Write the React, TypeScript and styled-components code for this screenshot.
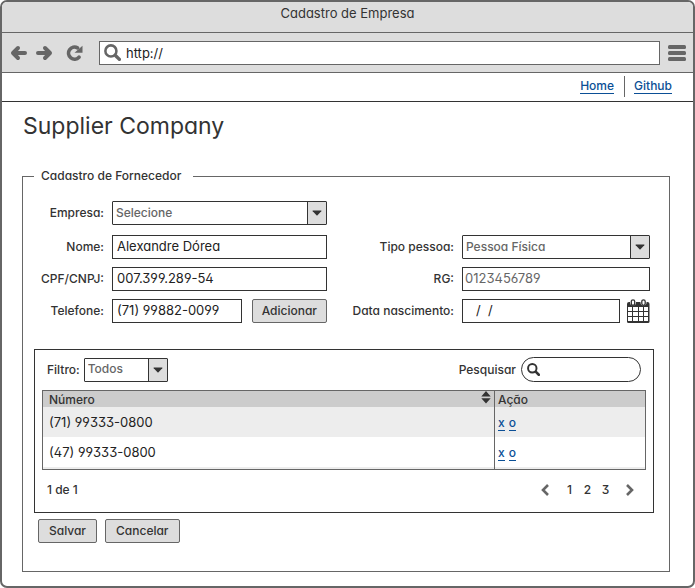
import React from 'react';
import styled, { createGlobalStyle } from 'styled-components';

const ink = '#333';
const steel = '#666';
const panel = '#ddd';

const GlobalStyle = createGlobalStyle`
  *, *::before, *::after { box-sizing: border-box; }
  body { margin: 0; background: #fff; }
  body, input, select, button {
    font-family: Inter, 'Liberation Sans', sans-serif;
    font-size: 12px;
    font-weight: 500;
    line-height: 18px;
    font-feature-settings: 'cv11' 1, 'ss01' 1;
    color: ${ink};
  }
`;

const Frame = styled.div`
  min-height: 100vh;
  border: 2px solid ${steel};
  border-radius: 7px;
  background: #fff;
  overflow: hidden;
`;

const TitleBar = styled.div`
  height: 31px;
  padding-top: 2px;
  font-size: 13px;
  font-weight: 400;
  text-align: center;
  background: ${panel};
  border-bottom: 1px solid ${steel};
`;

const Toolbar = styled.div`
  display: flex;
  align-items: center;
  height: 40px;
  padding: 0 7px 0 8px;
  background: ${panel};
  border-bottom: 1px solid ${steel};
`;

const IconButton = styled.button<{ $gap: number }>`
  display: flex;
  flex: none;
  padding: 0;
  margin-right: ${(p) => p.$gap}px;
  border: 0;
  background: none;
  color: ${steel};
`;

const AddressBar = styled.label`
  display: flex;
  flex: 1;
  align-items: center;
  gap: 5px;
  height: 24px;
  padding-left: 4px;
  margin-right: 8px;
  border: 1px solid ${steel};
  background: #fff;
  color: ${steel};
`;

const BareInput = styled.input`
  flex: 1;
  min-width: 0;
  padding: 0;
  border: 0;
  outline: 0;
  font-size: 13px;
  font-weight: 400;
  color: #222;
  background: none;
`;

const Nav = styled.nav`
  display: flex;
  justify-content: flex-end;
  height: 29px;
  padding: 3px 11px 4px;
  border-bottom: 1px solid ${ink};
`;

const NavItem = styled.div`
  padding: 1px 10px 0 9px;
  & + & { border-left: 1px solid ${steel}; }
`;

const Link = styled.a`
  display: inline-block;
  line-height: 15px;
  color: #0b4f96;
  text-decoration: none;
  border-bottom: 1px solid #0b4f96;
`;

const Main = styled.main`
  padding: 9px 23px 14px 21px;
`;

const Heading = styled.h1`
  margin: 0 0 25px;
  font-size: 23px;
  line-height: 30px;
  font-weight: 400;
`;

const Group = styled.fieldset`
  min-width: 0;
  margin: 0 0 0 -1px;
  padding: 15px 15px 28px 11px;
  border: 1px solid ${steel};
`;

const Legend = styled.legend`
  padding: 1px 12px 1px 7px;
`;

const FormGrid = styled.div`
  display: grid;
  grid-template-columns: 70px minmax(0, 215fr) 119px minmax(0, 188fr);
  grid-template-rows: 26px repeat(3, 24px);
  column-gap: 8px;
  row-gap: 8px;
  padding-right: 4px;
  margin-bottom: 26px;
`;

const Label = styled.label<{ $start?: boolean }>`
  height: 24px;
  line-height: 23px;
  text-align: right;
  white-space: nowrap;
  justify-self: end;
  ${(p) => p.$start && 'grid-column: 1;'}
`;

const TextInput = styled.input`
  flex: 1;
  width: 100%;
  min-width: 0;
  height: 24px;
  padding: 0 4px 2px;
  border: 1px solid ${ink};
  border-radius: 0;
  font-size: 13px;
  font-weight: 400;
  color: #222;
  background: #fff;
  &::placeholder { color: ${steel}; opacity: 1; }
`;

const MutedInput = styled(TextInput)`
  padding-left: 2px;
`;

const DateInput = styled(TextInput)`
  padding-left: 13px;
  white-space: pre;
`;

const FieldRow = styled.div<{ $gap: number }>`
  display: flex;
  align-items: center;
  gap: ${(p) => p.$gap}px;
`;

const SelectShell = styled.div<{ $width?: number }>`
  position: relative;
  height: 24px;
  width: ${(p) => (p.$width ? `${p.$width}px` : '100%')};
`;

const NativeSelect = styled.select`
  appearance: none;
  width: 100%;
  height: 24px;
  padding: 0 22px 1px 3px;
  border: 1px solid ${ink};
  border-radius: 1px;
  background: #fff;
  color: ${steel};
`;

const SelectArrow = styled.span`
  position: absolute;
  top: 1px;
  right: 1px;
  bottom: 1px;
  display: flex;
  align-items: center;
  justify-content: center;
  width: 19px;
  background: ${panel};
  border-left: 1px solid ${ink};
  pointer-events: none;
`;

const Button = styled.button`
  height: 24px;
  padding: 0 9px;
  border: 1px solid ${steel};
  border-radius: 2px;
  background: ${panel};
  white-space: nowrap;
`;

const CalendarButton = styled(IconButton)`
  color: ${ink};
`;

const ListPanel = styled.section`
  padding: 7px;
  border: 1px solid ${ink};
`;

const PanelHead = styled.div`
  display: flex;
  align-items: center;
  justify-content: space-between;
  padding: 0 5px;
  margin-bottom: 8px;
`;

const SearchBox = styled.span`
  display: flex;
  align-items: center;
  width: 120px;
  height: 25px;
  padding: 0 10px 0 5px;
  border: 1px solid ${ink};
  border-radius: 13px;
`;

const TableFrame = styled.div`
  border: 1px solid ${steel};
`;

const Table = styled.table`
  width: 100%;
  table-layout: fixed;
  border-collapse: collapse;
`;

const HeadCell = styled.th<{ $share?: string }>`
  width: ${(p) => p.$share ?? 'auto'};
  height: 16px;
  padding: 0 3px 0 6px;
  line-height: 16px;
  font-weight: 500;
  text-align: left;
  background: #ccc;
  & + & { border-left: 1px solid ${steel}; padding-left: 3px; }
`;

const HeadContent = styled.span`
  display: flex;
  justify-content: space-between;
  height: 16px;
  line-height: 17px;
`;

const Row = styled.tr`
  background: #fff;
  &:nth-child(odd) { background: #ededed; }
`;

const Cell = styled.td<{ $height?: number }>`
  height: ${(p) => p.$height ?? 30}px;
  padding: 0 6px;
  font-size: 13px;
  font-weight: 400;
  color: #222;
  & + & { border-left: 1px solid ${steel}; padding-left: 3px; }
`;

const ActionLinks = styled.span`
  display: flex;
  gap: 4px;
  font-size: 12px;
  font-weight: 500;
  padding-top: 1px;
`;

const PanelFoot = styled.div`
  display: flex;
  align-items: center;
  justify-content: space-between;
  height: 24px;
  padding: 0 12px 0 5px;
  margin: 8px 0 3px;
`;

const Pager = styled.div`
  display: flex;
  align-items: center;
  gap: 12px;
`;

const Pages = styled.span`
  display: flex;
  gap: 1px;
`;

const PageButton = styled.button`
  width: 17px;
  padding: 0;
  border: 0;
  background: none;
`;

const Actions = styled.div`
  display: flex;
  gap: 8px;
  padding: 6px 4px 0;
`;

const ActionButton = styled(Button)`
  padding: 0 10px;
`;

const Arrow = ({ back }: { back?: boolean }) => (
  <svg width="17" height="16" viewBox="0 0 17 16" fill="none" stroke="currentColor" strokeWidth="4" strokeLinecap="round" strokeLinejoin="round">
    <path d={back ? 'M15 8H4M8 3L3 8l5 5' : 'M2 8h11M9 3l5 5-5 5'} />
  </svg>
);

const Reload = () => (
  <svg width="17" height="16" viewBox="0 0 17 16">
    <path d="M13 12.200A6 6 0 1 1 11.500 2.900" fill="none" stroke="currentColor" strokeWidth="3.600" strokeLinecap="round" />
    <path d="M16.500.8v7H8.500z" fill="currentColor" />
  </svg>
);

const Magnifier = ({ size, weight }: { size: number; weight: number }) => (
  <svg width={size} height={size} viewBox="0 0 16 16" fill="none" stroke="currentColor" strokeLinecap="round">
    <circle cx="6.500" cy="6.500" r="5.200" strokeWidth={weight} />
    <path d="M11 11l3.500 3.500" strokeWidth={weight + 0.8} />
  </svg>
);

const Menu = () => (
  <svg width="18" height="16" viewBox="0 0 18 16" fill="currentColor">
    <rect width="18" height="4" rx="1.500" />
    <rect y="6" width="18" height="4" rx="1.500" />
    <rect y="12" width="18" height="4" rx="1.500" />
  </svg>
);

const Caret = () => (
  <svg width="10" height="6" viewBox="0 0 10 6" fill={ink}>
    <path d="M1 .5h8q.9 0 .3.700L5.500 5.200q-.5.500-1 0L.7 1.200Q.1.500 1 .5z" />
  </svg>
);

const SortMark = () => (
  <svg width="10" height="13" viewBox="0 0 10 13" fill={ink}>
    <path d="M5 0l4.700 5.500H.3zM.3 7.200h9.400L5 12.500z" />
  </svg>
);

const Calendar = () => (
  <svg width="23" height="25" viewBox="0 0 23 25">
    <path d="M0 5q0-2 2-2h18.500q2 0 2 2v17.500q0 1.500-1.500 1.500h-19.500Q0 24 0 22.500z" fill="currentColor" />
    <g fill="#fff">
      {[8, 13, 18].map((y) =>
        [1, 6, 12, 17].map((x) => (
          <rect key={`${x}-${y}`} x={x} y={y} width={x === 6 ? 5 : 4} height="4" />
        )),
      )}
      <rect x="3" y="0" width="6" height="6.500" rx="3" />
      <rect x="13.500" y="0" width="6" height="6.500" rx="3" />
    </g>
    <g fill="#fff" stroke="currentColor" strokeWidth="1.300">
      <rect x="4.300" y=".8" width="3.400" height="5.500" rx="1.700" />
      <rect x="14.800" y=".8" width="3.400" height="5.500" rx="1.700" />
    </g>
  </svg>
);

const Chevron = ({ back }: { back?: boolean }) => (
  <svg width="8" height="12" viewBox="0 0 8 12" fill="none" stroke="currentColor" strokeWidth="2.600">
    <path d={back ? 'M7 1L2 6l5 5' : 'M1 1l5 5-5 5'} />
  </svg>
);

const Select = ({ id, value, width }: { id: string; value: string; width?: number }) => (
  <SelectShell $width={width}>
    <NativeSelect id={id} defaultValue={value}>
      <option>{value}</option>
    </NativeSelect>
    <SelectArrow>
      <Caret />
    </SelectArrow>
  </SelectShell>
);

const phones = ['(71) 99333-0800', '(47) 99333-0800'];

export default function App() {
  return (
    <Frame>
      <GlobalStyle />
      <TitleBar>Cadastro de Empresa</TitleBar>
      <Toolbar>
        <IconButton $gap={9} aria-label="Voltar"><Arrow back /></IconButton>
        <IconButton $gap={13} aria-label="Avançar"><Arrow /></IconButton>
        <IconButton $gap={16} aria-label="Recarregar"><Reload /></IconButton>
        <AddressBar>
          <Magnifier size={17} weight={2.4} />
          <BareInput aria-label="Endereço" defaultValue="http://" />
        </AddressBar>
        <IconButton $gap={0} aria-label="Menu"><Menu /></IconButton>
      </Toolbar>
      <Nav>
        <NavItem><Link href="#home">Home</Link></NavItem>
        <NavItem><Link href="#github">Github</Link></NavItem>
      </Nav>
      <Main>
        <Heading>Supplier Company</Heading>
        <Group>
          <Legend>Cadastro de Fornecedor</Legend>
          <FormGrid>
            <Label htmlFor="empresa" $start>Empresa:</Label>
            <Select id="empresa" value="Selecione" />

            <Label htmlFor="nome" $start>Nome:</Label>
            <TextInput id="nome" defaultValue="Alexandre Dórea" />
            <Label htmlFor="tipo">Tipo pessoa:</Label>
            <Select id="tipo" value="Pessoa Física" />

            <Label htmlFor="cpf" $start>CPF/CNPJ:</Label>
            <TextInput id="cpf" defaultValue="007.399.289-54" />
            <Label htmlFor="rg">RG:</Label>
            <MutedInput id="rg" placeholder="0123456789" />

            <Label htmlFor="telefone" $start>Telefone:</Label>
            <FieldRow $gap={10}>
              <TextInput id="telefone" defaultValue="(71) 99882-0099" />
              <Button type="button">Adicionar</Button>
            </FieldRow>
            <Label htmlFor="nascimento">Data nascimento:</Label>
            <FieldRow $gap={7}>
              <DateInput id="nascimento" defaultValue="/  /" />
              <CalendarButton $gap={0} type="button" aria-label="Calendário"><Calendar /></CalendarButton>
            </FieldRow>
          </FormGrid>

          <ListPanel>
            <PanelHead>
              <FieldRow $gap={4}>
                <label htmlFor="filtro">Filtro:</label>
                <Select id="filtro" value="Todos" width={84} />
              </FieldRow>
              <FieldRow $gap={5}>
                <label htmlFor="pesquisar">Pesquisar</label>
                <SearchBox>
                  <Magnifier size={13} weight={2.4} />
                  <BareInput id="pesquisar" type="text" />
                </SearchBox>
              </FieldRow>
            </PanelHead>
            <TableFrame>
              <Table>
                <thead>
                  <tr>
                    <HeadCell $share="75%">
                      <HeadContent>Número <SortMark /></HeadContent>
                    </HeadCell>
                    <HeadCell><HeadContent>Ação</HeadContent></HeadCell>
                  </tr>
                </thead>
                <tbody>
                  {phones.map((phone) => (
                    <Row key={phone}>
                      <Cell>{phone}</Cell>
                      <Cell>
                        <ActionLinks>
                          <Link href="#excluir">x</Link>
                          <Link href="#abrir">o</Link>
                        </ActionLinks>
                      </Cell>
                    </Row>
                  ))}
                  <Row aria-hidden="true">
                    <Cell $height={2} />
                    <Cell $height={2} />
                  </Row>
                </tbody>
              </Table>
            </TableFrame>
            <PanelFoot>
              <span>1 de 1</span>
              <Pager>
                <IconButton $gap={0} type="button" aria-label="Anterior"><Chevron back /></IconButton>
                <Pages>
                  {[1, 2, 3].map((n) => <PageButton key={n} type="button">{n}</PageButton>)}
                </Pages>
                <IconButton $gap={0} type="button" aria-label="Próxima"><Chevron /></IconButton>
              </Pager>
            </PanelFoot>
          </ListPanel>
          <Actions>
            <ActionButton type="submit">Salvar</ActionButton>
            <ActionButton type="button">Cancelar</ActionButton>
          </Actions>
        </Group>
      </Main>
    </Frame>
  );
}
